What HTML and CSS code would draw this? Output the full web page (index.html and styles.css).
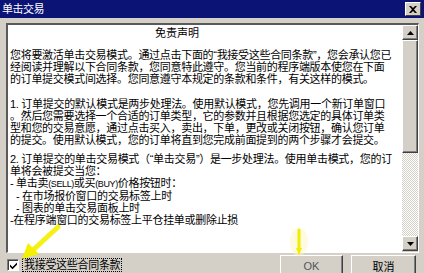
FILE: index.html
```html
<!DOCTYPE html>
<html lang="zh-CN">
<head>
<meta charset="utf-8">
<title>单击交易</title>
<link rel="stylesheet" href="styles.css">
</head>
<body>
<div class="window">
  <div class="titlebar">
    <span class="title">单击交易</span>
    <span class="close"><svg width="8" height="7" viewBox="0 0 8 7"><path d="M0 0h2l2 2 2-2h2L5 3.5 8 7H6L4 5 2 7H0l3-3.5z" fill="#000"/></svg></span>
  </div>
  <div class="body">
    <div class="textbox">
      <div class="text">
        <div class="heading">免责声明</div>
        <div class="para p1">
          <div class="ln">您将要激活单击交易模式。通过点击下面的“我接受这些合同条款”，您会承认您已</div>
          <div class="ln">经阅读并理解以下合同条款，您同意特此遵守。您当前的程序端版本使您在下面</div>
          <div class="ln">的订单提交模式间选择。您同意遵守本规定的条款和条件，有关这样的模式。</div>
        </div>
        <div class="para p2">
          <div class="ln">1. 订单提交的默认模式是两步处理法。使用默认模式，您先调用一个新订单窗口</div>
          <div class="ln">。然后您需要选择一个合适的订单类型，它的参数并且根据您选定的具体订单类</div>
          <div class="ln">型和您的交易意愿，通过点击买入，卖出，下单，更改或关闭按钮，确认您订单</div>
          <div class="ln">的提交。使用默认模式，您的订单将直到您完成前面提到的两个步骤才会提交。</div>
        </div>
        <div class="para p3">
          <div class="ln">2. 订单提交的单击交易模式（“单击交易”）是一步处理法。使用单击模式，您的订</div>
          <div class="ln">单将会被提交当您：</div>
          <div class="ln">- 单击卖<span class="sm">(SELL)</span>或买<span class="sm">(BUY)</span>价格按钮时：</div>
          <div class="ln ind">- 在市场报价窗口的交易标签上时</div>
          <div class="ln ind">- 图表的单击交易面板上时</div>
          <div class="ln">-在程序端窗口的交易标签上平仓挂单或删除止损</div>
        </div>
      </div>
      <div class="scrollbar">
        <div class="sbtn"><svg width="7" height="4" viewBox="0 0 7 4"><path d="M3.5 0L7 4H0z" fill="#000"/></svg></div>
        <div class="thumb"></div>
        <div class="track"></div>
        <div class="sbtn"><svg width="7" height="4" viewBox="0 0 7 4"><path d="M0 0h7L3.5 4z" fill="#000"/></svg></div>
      </div>
    </div>
    <div class="footer">
      <label class="agree">
        <span class="check"><svg width="9" height="9" viewBox="0 0 9 9"><path d="M1 3.5l2.5 2.5L8 1.5v2.2L3.5 8.2 1 5.7z" fill="#000"/></svg></span>
        <span class="lbl">我接受这些合同条款</span>
      </label>
      <div class="buttons">
        <button class="btn ok">OK</button>
        <button class="btn">取消</button>
      </div>
    </div>
  </div>
  <svg class="arrow a1" width="60" height="40" viewBox="0 0 60 40">
    <path d="M50 4 L24 28" stroke="#f5f000" stroke-width="5" stroke-linecap="round" opacity="0.9"/>
    <path d="M14 36 L20 20 L31 31 Z" fill="#f5f000"/>
  </svg>
  <svg class="arrow a2" width="24" height="30" viewBox="0 0 24 30">
    <ellipse cx="12" cy="14" rx="9" ry="14" fill="#fbf6c0" opacity="0.5"/>
    <path d="M12 2 L12 22" stroke="#f2ec00" stroke-width="3" stroke-linecap="round"/>
    <path d="M9 20 L15 20 L12 27 Z" fill="#f2ec00"/>
  </svg>
</div>
</body>
</html>
```
FILE: styles.css
```css
* { box-sizing: border-box; }
html, body { margin: 0; padding: 0; }
body {
  width: 424px;
  height: 273px;
  overflow: hidden;
  background: #d4d0c8;
  font-family: "Liberation Sans", "Noto Sans CJK SC", sans-serif;
}
.window {
  position: relative;
  width: 424px;
  height: 273px;
  background: #d4d0c8;
}
.titlebar {
  height: 18px;
  background: #0b1474;
  display: flex;
  align-items: center;
  justify-content: space-between;
  padding: 0 3px 0 2px;
}
.title {
  color: #fff;
  font-size: 11px;
  line-height: 12px;
  letter-spacing: -0.5px;
}
.close {
  width: 16px;
  height: 14px;
  background: #d4d0c8;
  border-top: 1px solid #fff;
  border-left: 1px solid #fff;
  border-right: 1px solid #404040;
  border-bottom: 1px solid #404040;
  display: flex;
  align-items: center;
  justify-content: center;
}
.body {
  padding: 5px 5px 0 6px;
}
.textbox {
  display: flex;
  height: 230px;
  border-top: 2px solid #5a5a5a;
  border-left: 2px solid #5a5a5a;
  border-right: 1px solid #fff;
  border-bottom: 1px solid #fff;
  box-shadow: inset -1px -1px 0 #d4d0c8;
}
.text {
  flex: 1;
  background: #fff;
  padding: 2px 0 0 2px;
  font-size: 11px;
  line-height: 12px;
  color: #000;
  overflow: hidden;
}
.heading {
  padding-left: 145px;
  margin-bottom: 10px;
}
.ln {
  white-space: nowrap;
  letter-spacing: -0.3px;
}
.ind { padding-left: 6px; }
.sm { font-size: 9px; letter-spacing: -0.4px; }
.p1 { margin-bottom: 13px; }
.p2 { margin-bottom: 7px; }
.scrollbar {
  width: 16px;
  display: flex;
  flex-direction: column;
  margin-bottom: 1px;
}
.sbtn {
  height: 15px;
  background: #d4d0c8;
  border-top: 1px solid #fff;
  border-left: 1px solid #fff;
  border-right: 1px solid #404040;
  border-bottom: 1px solid #404040;
  box-shadow: inset -1px -1px 0 #808080;
  display: flex;
  align-items: center;
  justify-content: center;
}
.thumb {
  height: 113px;
  background: #d4d0c8;
  border-top: 1px solid #fff;
  border-left: 1px solid #fff;
  border-right: 1px solid #404040;
  border-bottom: 1px solid #404040;
  box-shadow: inset -1px -1px 0 #808080;
}
.track {
  flex: 1;
  background: repeating-conic-gradient(#d4d0c8 0 25%, #fff 0 50%) 0 0 / 2px 2px;
}
.footer {
  display: flex;
  justify-content: space-between;
  align-items: flex-start;
  padding-top: 2px;
}
.agree {
  display: flex;
  align-items: center;
  gap: 3px;
  margin-top: 3px;
  margin-left: 1px;
}
.check {
  width: 12px;
  height: 12px;
  background: #fff;
  border-top: 1px solid #808080;
  border-left: 1px solid #808080;
  border-right: 1px solid #fff;
  border-bottom: 1px solid #fff;
  box-shadow: inset 1px 1px 0 #404040;
  display: flex;
  align-items: center;
  justify-content: center;
}
.lbl {
  font-size: 11px;
  line-height: 12px;
  padding: 0 1px;
  border: 1px dotted #000;
  letter-spacing: -0.3px;
}
.buttons {
  display: flex;
  gap: 8px;
  margin-right: 3px;
}
.btn {
  width: 65px;
  height: 23px;
  margin: 0;
  padding: 0;
  background: #d4d0c8;
  font-family: "Liberation Sans", "Noto Sans CJK SC", sans-serif;
  font-size: 11px;
  color: #000;
  border-top: 1px solid #fff;
  border-left: 1px solid #fff;
  border-right: 1px solid #404040;
  border-bottom: 1px solid #404040;
  box-shadow: inset -1px -1px 0 #808080;
  padding-bottom: 2px;
}
.btn.ok { width: 63px; color: #555; }
.arrow { position: absolute; }
.a1 { left: 8px; top: 223px; }
.a2 { left: 287px; top: 228px; }
```
